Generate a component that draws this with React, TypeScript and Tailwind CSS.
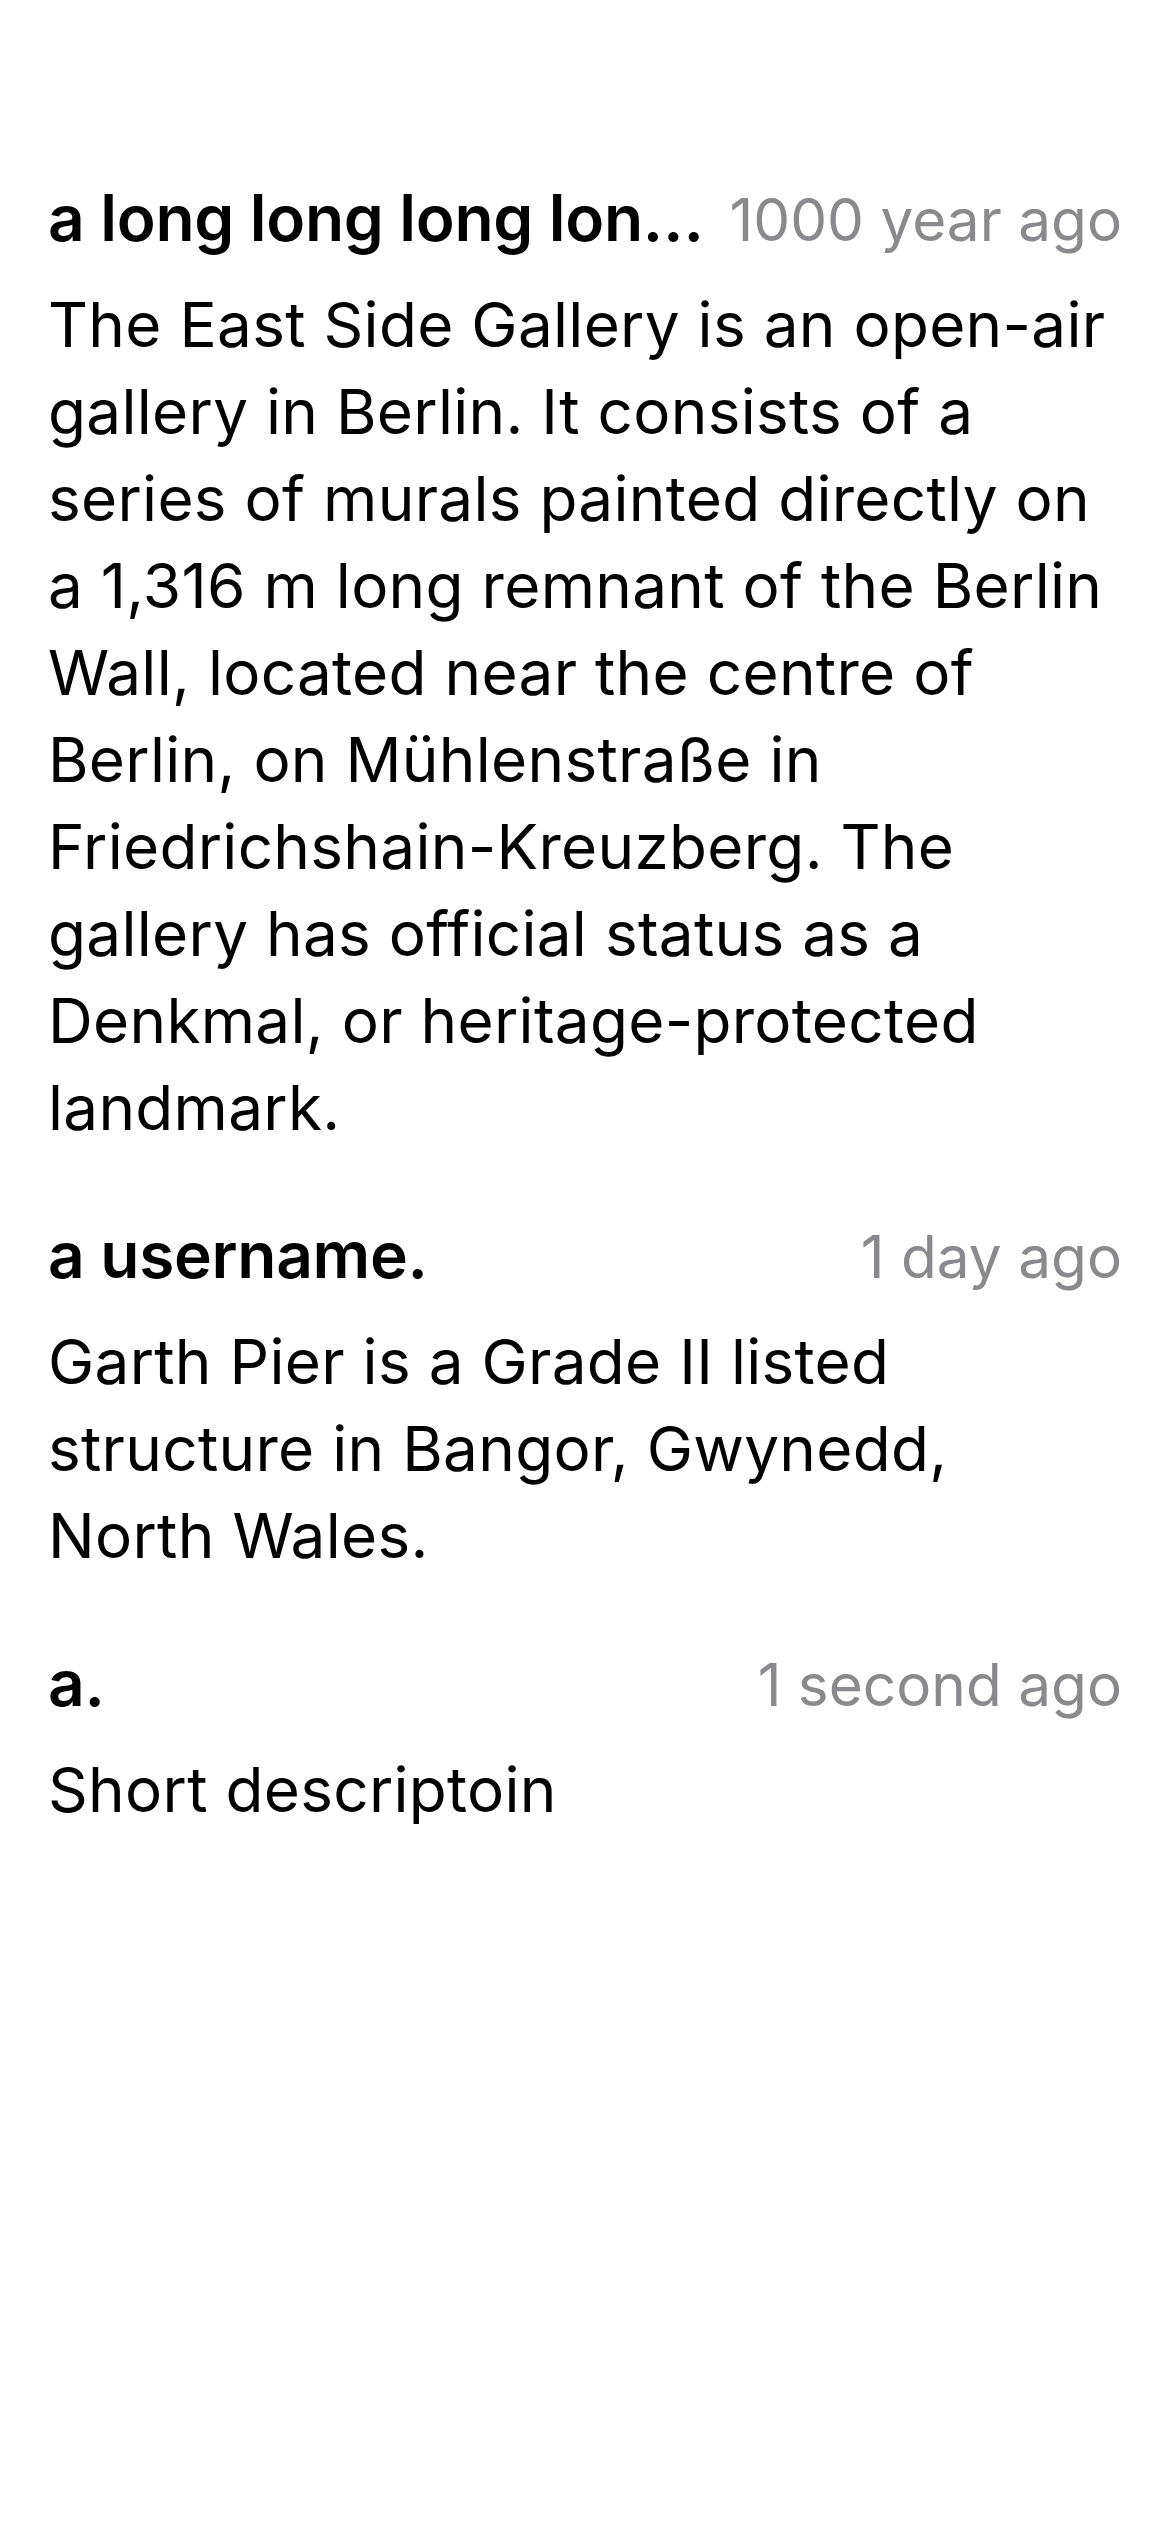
import React from "react";

const items = [
  {
    name: "a long long long long long long username.",
    time: "1000 year ago",
    body:
      "The East Side Gallery is an open-air gallery in Berlin. It consists of a series of murals painted directly on a 1,316 m long remnant of the Berlin Wall, located near the centre of Berlin, on Mühlenstraße in Friedrichshain-Kreuzberg. The gallery has official status as a Denkmal, or heritage-protected landmark.",
  },
  {
    name: "a username.",
    time: "1 day ago",
    body: "Garth Pier is a Grade II listed structure in Bangor, Gwynedd, North Wales.",
  },
  {
    name: "a.",
    time: "1 second ago",
    body: "Short descriptoin",
  },
];

export default function App() {
  return (
    <div
      className="min-h-[2532px] w-[1170px] bg-white px-[48px] pt-[178px] text-black"
      style={{ fontFamily: 'Inter, "Noto Sans", sans-serif' }}
    >
      <div className="flex flex-col gap-[64px]">
        {items.map((it) => (
          <div key={it.name} className="flex flex-col gap-[21px]">
            <div className="flex items-baseline gap-[14px]">
              <div className="min-w-0 flex-1 truncate text-[64px] font-semibold leading-[80px] tracking-[-0.3px]">
                {it.name}
              </div>
              <div className="shrink-0 text-[58.5px] leading-[80px] text-[#8a8a8e]">
                {it.time}
              </div>
            </div>
            <p className="text-[62px] leading-[87px] tracking-[0.3px]">{it.body}</p>
          </div>
        ))}
      </div>
    </div>
  );
}
